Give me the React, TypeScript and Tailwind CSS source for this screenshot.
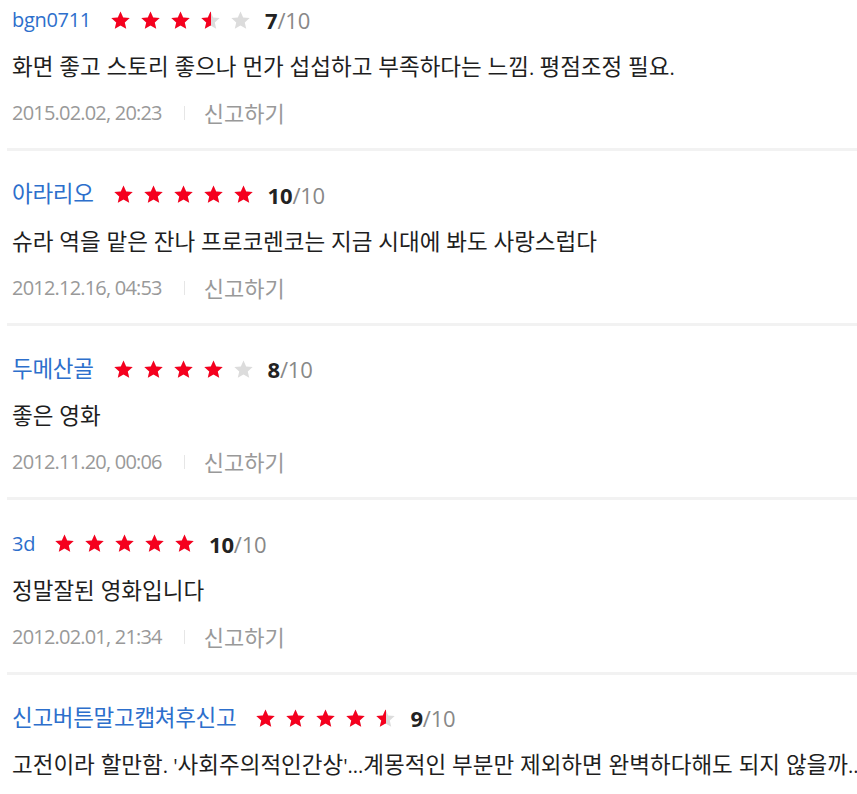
import React from 'react';

type Review = {
  name: string;
  score: number;
  text: string;
  date: string;
};

const reviews: Review[] = [
  { name: 'bgn0711', score: 7, text: '화면 좋고 스토리 좋으나 먼가 섭섭하고 부족하다는 느낌. 평점조정 필요.', date: '2015.02.02, 20:23' },
  { name: '아라리오', score: 10, text: '슈라 역을 맡은 잔나 프로코렌코는 지금 시대에 봐도 사랑스럽다', date: '2012.12.16, 04:53' },
  { name: '두메산골', score: 8, text: '좋은 영화', date: '2012.11.20, 00:06' },
  { name: '3d', score: 10, text: '정말잘된 영화입니다', date: '2012.02.01, 21:34' },
  { name: '신고버튼말고캡쳐후신고', score: 9, text: "고전이라 할만함. '사회주의적인간상'...계몽적인 부분만 제외하면 완벽하다해도 되지 않을까..", date: '2011.08.14, 11:02' },
];

const STAR = 'M12 1.6l3.05 6.9 7.45.72-5.63 4.98 1.66 7.35L12 17.7l-6.53 3.85 1.66-7.35L1.5 9.22l7.45-.72z';

// hangul runs are set a bit larger so they match the latin widths of the original font
function Mixed({ text }: { text: string }) {
  const parts = text.split(/([\uac00-\ud7a3\u3131-\u318e]+(?: [\uac00-\ud7a3\u3131-\u318e]+)*)/);
  return (
    <>
      {parts.map((p, i) =>
        /[\uac00-\ud7a3]/.test(p) ? (
          <span key={i} className="text-[22.5px]">{p}</span>
        ) : (
          <span key={i}>{p}</span>
        )
      )}
    </>
  );
}

function Star({ fill }: { fill: number }) {
  return (
    <span className="relative block w-[21px] h-[21px]">
      <svg viewBox="0 0 24 24" className="absolute inset-0 w-[21px] h-[21px]">
        <path d={STAR} fill="#dcdcdc" />
      </svg>
      {fill > 0 && (
        <span className="absolute inset-y-0 left-0 overflow-hidden" style={{ width: `${fill * 21}px` }}>
          <svg viewBox="0 0 24 24" className="w-[21px] h-[21px]">
            <path d={STAR} fill="#f5001e" />
          </svg>
        </span>
      )}
    </span>
  );
}

function Stars({ score }: { score: number }) {
  const half = score / 2;
  return (
    <div className="flex items-center gap-[9px]">
      {[0, 1, 2, 3, 4].map((i) => (
        <Star key={i} fill={Math.max(0, Math.min(1, half - i))} />
      ))}
    </div>
  );
}

export default function App() {
  return (
    <div
      className="w-[857px] h-[794px] overflow-hidden bg-white"
      style={{ fontFamily: "'Open Sans', 'Noto Sans CJK KR', sans-serif" }}
    >
      <ul className="flex flex-col gap-[23.5px]">
        {reviews.map((r) => (
          <li key={r.name} className="ml-[7px] pl-[5px] pt-[6px] pb-[21px] border-b-[3px] border-[#f2f2f2]">
            <div className="flex items-center h-[28px]">
              <span className="text-[20px] leading-[28px] text-[#2d6fcc] tracking-[-0.3px]">
                <Mixed text={r.name} />
              </span>
              <div className="ml-[19px]">
                <Stars score={r.score} />
              </div>
              <span className="ml-[14px] text-[22px] leading-[28px] tracking-[-0.2px]">
                <b className="font-bold text-[#222]">{r.score}</b>
                <span className="text-[#888]">/10</span>
              </span>
            </div>
            <p className="mt-[19px] h-[28px] leading-[28px] text-[20px] text-[#1e1e1e] whitespace-nowrap">
              <Mixed text={r.text} />
            </p>
            <div className="mt-[18px] flex items-center h-[28px] leading-[28px] text-[20px] text-[#999]">
              <span className="tracking-[-0.8px]">{r.date}</span>
              <span className="ml-[22px] mr-[19px] w-px h-[14px] bg-[#e6e6e6]" />
              <span className="text-[22px]">신고하기</span>
            </div>
          </li>
        ))}
      </ul>
    </div>
  );
}
